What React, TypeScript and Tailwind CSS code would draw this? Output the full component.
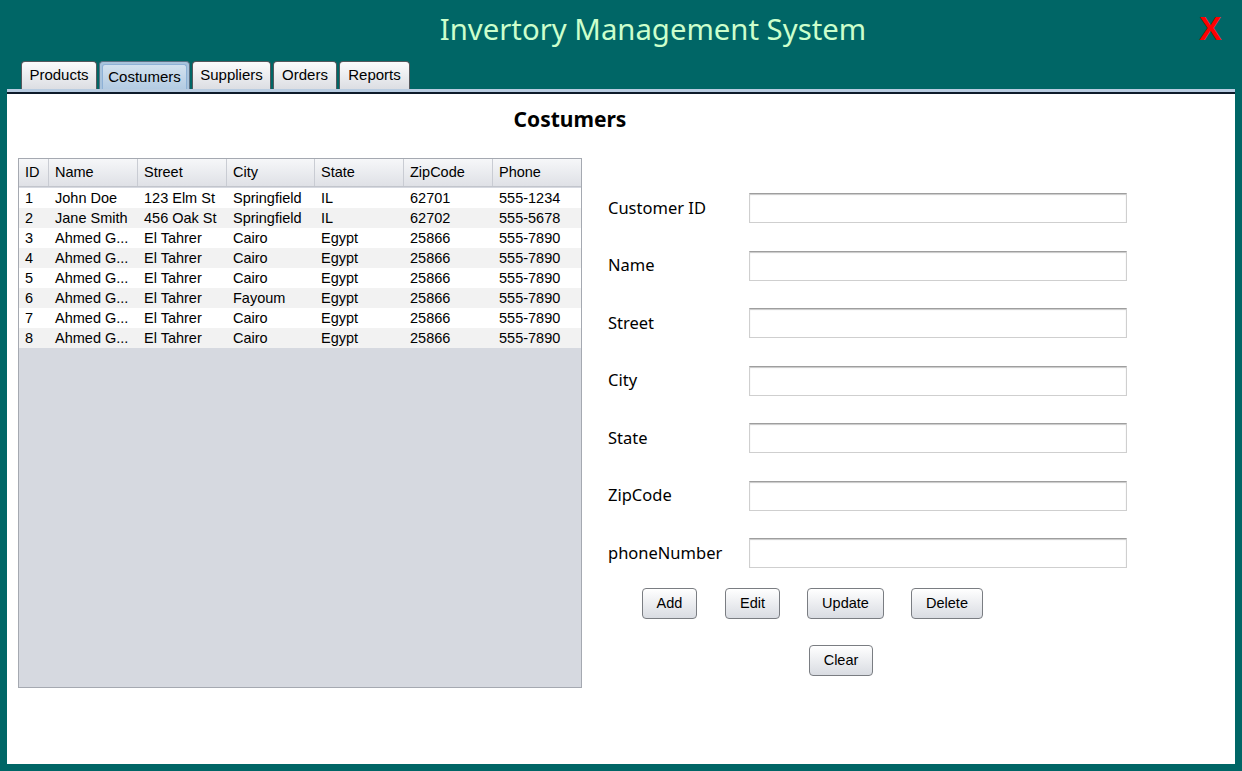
import React from 'react';

// --- DATA ---
const tabs = [
    { label: 'Products', w: 'w-[76px]' },
    { label: 'Costumers', w: 'w-[91px]' },
    { label: 'Suppliers', w: 'w-[79px]' },
    { label: 'Orders', w: 'w-[64px]' },
    { label: 'Reports', w: 'w-[71px]' },
];

const columns = [
    { key: 'id', label: 'ID', w: 'w-[30px]' },
    { key: 'name', label: 'Name', w: 'w-[89px]' },
    { key: 'street', label: 'Street', w: 'w-[89px]' },
    { key: 'city', label: 'City', w: 'w-[88px]' },
    { key: 'state', label: 'State', w: 'w-[89px]' },
    { key: 'zip', label: 'ZipCode', w: 'w-[89px]' },
    { key: 'phone', label: 'Phone', w: 'flex-1' },
];

const rows = [
    ['1', 'John Doe', '123 Elm St', 'Springfield', 'IL', '62701', '555-1234'],
    ['2', 'Jane Smith', '456 Oak St', 'Springfield', 'IL', '62702', '555-5678'],
    ['3', 'Ahmed G...', 'El Tahrer', 'Cairo', 'Egypt', '25866', '555-7890'],
    ['4', 'Ahmed G...', 'El Tahrer', 'Cairo', 'Egypt', '25866', '555-7890'],
    ['5', 'Ahmed G...', 'El Tahrer', 'Cairo', 'Egypt', '25866', '555-7890'],
    ['6', 'Ahmed G...', 'El Tahrer', 'Fayoum', 'Egypt', '25866', '555-7890'],
    ['7', 'Ahmed G...', 'El Tahrer', 'Cairo', 'Egypt', '25866', '555-7890'],
    ['8', 'Ahmed G...', 'El Tahrer', 'Cairo', 'Egypt', '25866', '555-7890'],
];

const fields = ['Customer ID', 'Name', 'Street', 'City', 'State', 'ZipCode', 'phoneNumber'];

const SwingButton = ({ label, w, className = '' }: { label: string; w: string; className?: string }) => (
    <button className={`${w} ${className} h-[31px] rounded-[4px] border border-[#7a7d82] bg-gradient-to-b from-white to-[#d9dce2] text-[14.5px] text-black shadow-[inset_0_1px_0_#ffffff]`}>
        {label}
    </button>
);

export default function App() {
    return (
        <div className="w-[1242px] h-[771px] bg-[#006666] flex flex-col overflow-hidden font-['Liberation_Sans',Arial,sans-serif]">
            {/* --- TITLE BAR --- */}
            <header className="relative h-[62px] flex justify-center pl-[64px]">
                <h1 className="mt-[9px] text-[29.3px] leading-[40px] text-[#ccffcc] font-['Noto_Sans',sans-serif]">
                    Invertory Management System
                </h1>
                <span className="absolute left-[1199px] top-[10px] text-[34px] leading-[36px] font-bold text-[#ff0000] font-['Liberation_Sans',Arial,sans-serif]">
                    X
                </span>
            </header>

            {/* --- TABS --- */}
            <nav className="h-[28px] pl-[21px] -mt-[1px] flex items-end gap-[2px]">
                {tabs.map(tab => (
                    tab.label === 'Costumers' ? (
                        <div key={tab.label} className={`${tab.w} h-[28px] px-[2px] pt-[2px] rounded-t-[4px] border border-b-0 border-[#5c6f82] bg-[#a9c3dc]`}>
                            <div className="h-full rounded-t-[3px] border border-b-0 border-[#8eb1d6] bg-gradient-to-b from-[#d3e1ee] to-[#b3cbe2] flex items-center justify-center text-[15px] text-black">
                                {tab.label}
                            </div>
                        </div>
                    ) : (
                        <div key={tab.label} className={`${tab.w} h-[28px] rounded-t-[4px] border border-b-0 border-[#55585d] bg-gradient-to-b from-[#fbfbfc] to-[#dcdee3] flex items-center justify-center text-[15px] text-black`}>
                            {tab.label}
                        </div>
                    )
                ))}
            </nav>

            {/* --- CONTENT PANEL --- */}
            <main className="mx-[7px] mb-[7px] flex-1 flex flex-col">
                <div className="h-[3px] bg-[#b8cce1]" />
                <div className="h-[2px] bg-[#0d1b2a]" />
                <div className="flex-1 bg-white flex flex-col">
                    <h2 className="mt-[13px] h-[24px] pr-[102px] leading-[24px] text-center text-[21px] font-bold text-black font-['Noto_Sans',sans-serif]">
                        Costumers
                    </h2>

                    <div className="mt-[27px] flex">
                        {/* --- TABLE --- */}
                        <div className="ml-[11px] w-[564px] h-[530px] border border-[#a5a9b1] bg-[#d6d9e0] flex flex-col">
                            <div className="h-[28px] flex bg-gradient-to-b from-[#f6f7f9] to-[#dfe1e6] border-b border-[#c2c5cc]">
                                {columns.map((col, i) => (
                                    <div
                                        key={col.key}
                                        className={`${col.w} h-full flex items-center pl-[6px] pt-[1px] text-[14.5px] text-black ${i < columns.length - 1 ? 'border-r border-[#c9ccd3]' : ''}`}
                                    >
                                        {col.label}
                                    </div>
                                ))}
                            </div>
                            <div className="pt-[1px]">
                                {rows.map((row, r) => (
                                    <div key={r} className={`h-[20px] flex ${r % 2 === 0 ? 'bg-white' : 'bg-[#f2f2f2]'}`}>
                                        {row.map((cell, i) => (
                                            <div key={i} className={`${columns[i].w} pl-[6px] text-[14.5px] leading-[20px] text-black whitespace-nowrap overflow-hidden`}>
                                                {cell}
                                            </div>
                                        ))}
                                    </div>
                                ))}
                            </div>
                        </div>

                        {/* --- FORM --- */}
                        <div className="ml-[26px] pt-[35px] flex flex-col">
                            <div className="flex flex-col gap-[27.5px]">
                                {fields.map(field => (
                                    <div key={field} className="h-[30px] flex items-center">
                                        <label className="w-[141px] text-[16.5px] text-black font-['Noto_Sans',sans-serif]">{field}</label>
                                        <input className="w-[378px] h-[30px] border border-[#cfcfcf] border-t-[#9e9e9e] bg-white shadow-[inset_0_1px_1px_#c8c8c8] outline-none" />
                                    </div>
                                ))}
                            </div>

                            <div className="mt-[20px] ml-[34px] flex">
                                <SwingButton label="Add" w="w-[55px]" />
                                <SwingButton label="Edit" w="w-[55px]" className="ml-[28px]" />
                                <SwingButton label="Update" w="w-[77px]" className="ml-[27px]" />
                                <SwingButton label="Delete" w="w-[72px]" className="ml-[27px]" />
                            </div>
                            <div className="mt-[26px] ml-[201px] flex">
                                <SwingButton label="Clear" w="w-[64px]" />
                            </div>
                        </div>
                    </div>
                </div>
            </main>
        </div>
    );
}
